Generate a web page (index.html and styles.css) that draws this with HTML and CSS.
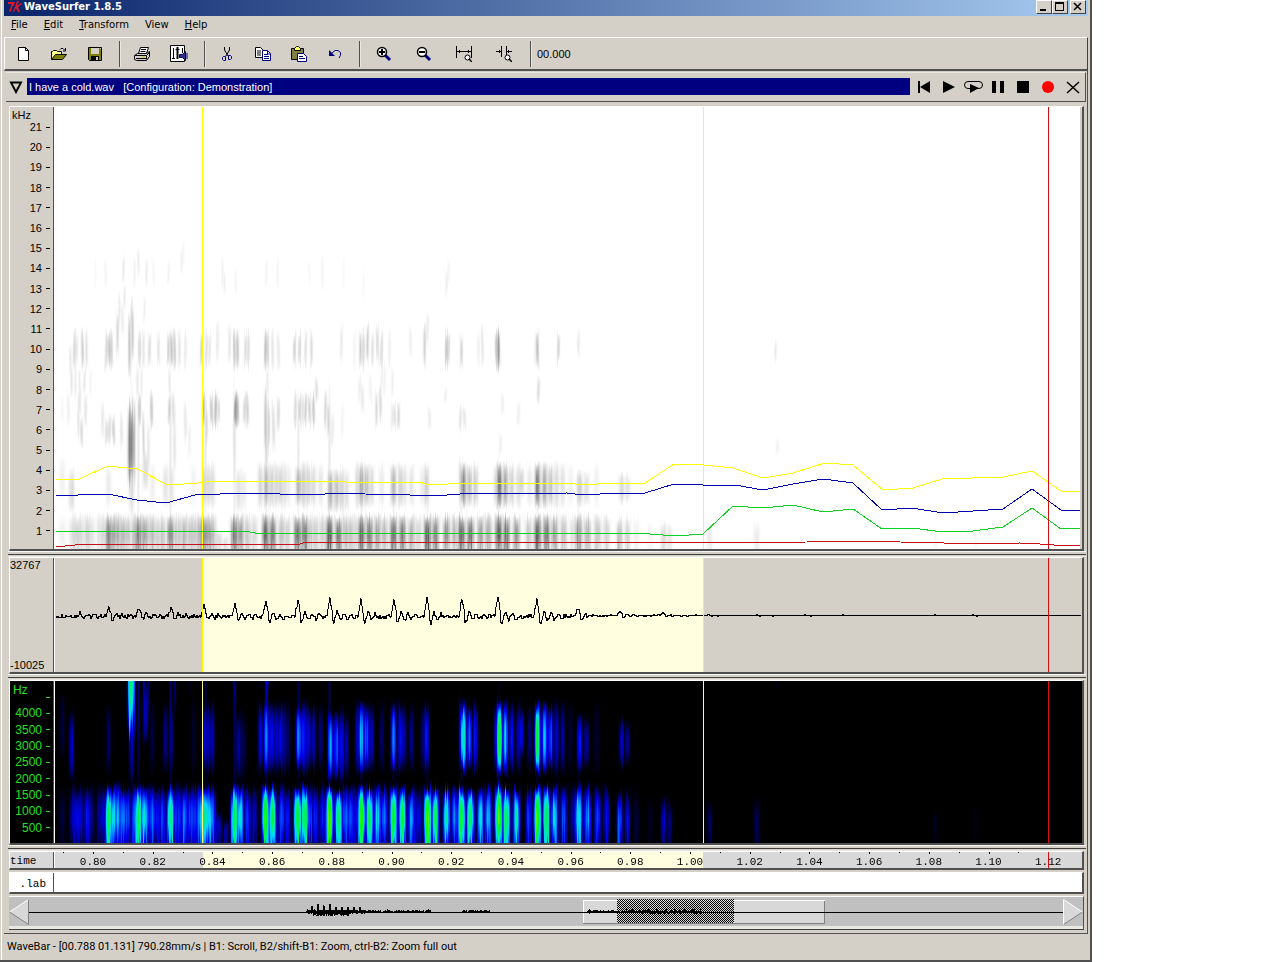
FILE: index.html
```html
<!DOCTYPE html>
<html lang="en">
<head>
<meta charset="utf-8">
<title>WaveSurfer 1.8.5</title>
<link rel="stylesheet" href="styles.css">
</head>
<body>
<div class="window">
  <header class="titlebar">
    <svg class="logo" width="16" height="14" viewBox="0 0 16 14"><path d="M1 2h7l-1 3-2 2-1 5-2-1 2-5 1-2H1zM10 1l2 0-2 5 4-3 1 1-4 3 2 5h-2l-2-4-2 4H6l2-5z" fill="#e01828"/></svg>
    <h1>WaveSurfer 1.8.5</h1>
    <div class="caption-buttons">
      <button aria-label="Minimize"><svg width="10" height="10"><path d="M1 7h6v2H1z"/></svg></button>
      <button aria-label="Maximize"><svg width="10" height="10"><path d="M0 0h9v9H0zM1 2v6h7V2z" fill-rule="evenodd"/></svg></button>
      <button class="close" aria-label="Close"><svg width="10" height="10"><path d="M1 1l7 7M8 1l-7 7" stroke="#000" stroke-width="1.500"/></svg></button>
    </div>
  </header>

  <nav class="menu">
    <button><u>F</u>ile</button>
    <button><u>E</u>dit</button>
    <button><u>T</u>ransform</button>
    <button>View</button>
    <button><u>H</u>elp</button>
  </nav>

  <div class="toolbar">
    <button aria-label="New"><svg class="icon" viewBox="0 0 16 16"><path d="M3.500 1.500h7l3 3v10h-10z" fill="#fff" stroke="#000"/><path d="M10.500 1.500v3h3" fill="none" stroke="#000"/></svg></button>
    <button aria-label="Open"><svg class="icon" viewBox="0 0 16 16"><path d="M.5 13.500v-8h1l1-1h3l1 1h4v3" fill="#ffff90" stroke="#000"/><path d="M.5 13.500l4-5h11l-4 5z" fill="#808000" stroke="#000"/><path d="M9 3.500l1-1h2l2 2M14.500 2v3H12" fill="none" stroke="#000"/></svg></button>
    <button aria-label="Save"><svg class="icon" viewBox="0 0 16 16"><path d="M1.500 1.500h13v13h-12l-1-1z" fill="#808000" stroke="#000"/><path d="M4 2h8v6H4z" fill="#d4d0c8"/><path d="M4 10h8v4H4z"/><path d="M9 11h2v3H9zM13 2h1v1h-1z" fill="#d4d0c8"/></svg></button>
    <span class="sep"></span>
    <button aria-label="Print"><svg class="icon" viewBox="0 0 16 16"><path d="M4.500 7.500l2-6h8l-2 6z" fill="#fff" stroke="#000"/><path d="M7 3.500h5M6.500 5.500h5" stroke="#000"/><path d="M.5 9.500l3-2h9l3-2v5l-3 4H2.500l-2-1z" fill="#d4d0c8" stroke="#000"/><path d="M1 9.500h11.500v4M12.500 9.500l3-3M2 12.500h10" fill="none" stroke="#000"/><path d="M8 10.500h3v1H8z" fill="#cc0"/></svg></button>
    <button class="wide" aria-label="Properties"><svg class="icon big" viewBox="0 0 18 18"><path d="M.5.5h14v16H.5z" fill="#fff" stroke="#000"/><path d="M3.500 3v10M5.500 4.500h4M2 13.500h3M12.500 3v5" stroke="#000"/><path d="M7.500 2v12" stroke="#000" stroke-width="2"/><path d="M9.500 9.500h3l3-3v9l-3-3h-3zM17 8v6" fill="#303080" stroke="#000080"/></svg></button>
    <span class="sep"></span>
    <button aria-label="Cut"><svg class="icon" viewBox="0 0 16 16"><path d="M5.500 1v3l3.500 6M10.500 1v3L7 10" fill="none" stroke="#000"/><path d="M4.500 10.500h2v4h-2l-1-1v-2zM9.500 9.500h2l1 1v2l-1 1h-2z" fill="none" stroke="#000080"/></svg></button>
    <button aria-label="Copy"><svg class="icon" viewBox="0 0 16 16"><path d="M.5 1.500h5l3 3v7h-8z" fill="#fff" stroke="#000"/><path d="M2 5h4M2 7h4M2 9h4" stroke="#000"/><path d="M7.500 4.500h5l3 3v7h-8z" fill="#fff" stroke="#000080"/><path d="M9 8.500h4M9 10.500h5M9 12.500h5M12.500 5v3h3" fill="none" stroke="#000080"/></svg></button>
    <button aria-label="Paste"><svg class="icon" viewBox="0 0 16 16"><path d="M.5 2.500h12v11H.5z" fill="#808040" stroke="#000"/><path d="M3.500 4.500v-2l2-2h2l2 2v2z" fill="#ffff60" stroke="#000"/><path d="M6.500 7.500h6l3 3v5h-9z" fill="#fff" stroke="#000080"/><path d="M8 10.500h4M8 12.500h6" stroke="#000080"/></svg></button>
    <button aria-label="Undo"><svg class="icon" viewBox="0 0 16 16"><path d="M2 4v6h6z" fill="#000080"/><path d="M5 7l3-2.500h3l2.500 2v3L12 12" fill="none" stroke="#000080"/></svg></button>
    <span class="sep"></span>
    <button class="zoom" aria-label="Zoom in"><svg class="icon" viewBox="0 0 16 16"><path d="M9 9l5 5" stroke="#000080" stroke-width="3"/><circle cx="6" cy="6" r="4.500" fill="#fff" stroke="#000" stroke-width="1.500"/><path d="M3 6h6M6 3v6" stroke="#000" stroke-width="2"/></svg></button>
    <button class="zoom" aria-label="Zoom out"><svg class="icon" viewBox="0 0 16 16"><path d="M9 9l5 5" stroke="#000080" stroke-width="3"/><circle cx="6" cy="6" r="4.500" fill="#fff" stroke="#000" stroke-width="1.500"/><path d="M3 6h6" stroke="#000" stroke-width="2"/></svg></button>
    <button class="zoom" aria-label="Zoom full out"><svg class="icon" viewBox="0 0 16 16"><path d="M.5 0v12M15.500 0v12M1 5.500h14M3.500 4v3M12.500 4v3" stroke="#000"/><circle cx="11.500" cy="11.500" r="2.500" fill="#fff" stroke="#000"/><path d="M13 13l3 3" stroke="#000" stroke-width="1.500"/></svg></button>
    <button class="zoom" aria-label="Zoom to selection"><svg class="icon" viewBox="0 0 16 16"><path d="M5.500 0v11M10.500 0v9M0 5.500h5M11 5.500h5M3.500 4v3M12.500 4v3" stroke="#000"/><circle cx="11.500" cy="11.500" r="2.500" fill="#fff" stroke="#000"/><path d="M13 13l3 3" stroke="#000" stroke-width="1.500"/></svg></button>
    <span class="sep"></span>
    <output>00.000</output>
  </div>

  <main class="work">
    <section class="sound">
      <button class="fold" aria-label="Fold"><svg width="14" height="14"><path d="M2 2.500h10L7 12z" fill="none" stroke="#000" stroke-width="2"/></svg></button>
      <h2>I have a cold.wav &nbsp; [Configuration: Demonstration]</h2>
      <div class="transport">
        <button aria-label="To start"><svg width="14" height="14"><path d="M1 1h2v12H1zM13 1v12L3 7z"/></svg></button>
        <button aria-label="Play"><svg width="14" height="14"><path d="M1 1l12 6-12 6z"/></svg></button>
        <button aria-label="Loop"><svg width="20" height="14"><rect x=".5" y="1.500" width="18" height="7" rx="3.500" fill="none" stroke="#000"/><path d="M6 4l9 4-9 5z"/></svg></button>
        <button aria-label="Pause"><svg width="14" height="14"><path d="M1 1h4v12H1zM9 1h4v12H9z"/></svg></button>
        <button aria-label="Stop"><svg width="14" height="14"><path d="M1 1h12v12H1z"/></svg></button>
        <button aria-label="Record"><svg width="14" height="14"><circle cx="7" cy="7" r="6" fill="#f00"/></svg></button>
        <button aria-label="Close sound"><svg width="14" height="14"><path d="M1 2l12 11M13 2L1 13" stroke="#000" stroke-width="1.500"/></svg></button>
      </div>
    </section>

    <section class="pane spectrogram">
      <div class="axis">
        <span class="unit">kHz</span>
        <ol><li>21</li><li>20</li><li>19</li><li>18</li><li>17</li><li>16</li><li>15</li><li>14</li><li>13</li><li>12</li><li>11</li><li>10</li><li>9</li><li>8</li><li>7</li><li>6</li><li>5</li><li>4</li><li>3</li><li>2</li><li>1</li></ol>
      </div>
      <div class="plot">
        <canvas id="gray" width="1027" height="442"></canvas>
        <svg class="overlay" viewBox="55 107 1027 442" preserveAspectRatio="none">
          <path d="M202.500 107v442M703.500 107v442" stroke="#ff0"/>
          <polyline stroke="#ff0" points="56,479 79,479 108,466 137,469 168,485 198,483 213,481 325,481 345,482 420,482 425,484 448,484 455,483 565,483 575,484 597,484 602,483 645,483 674,464 703,465 733,468 763,478 793,473 825,463 853,465 883,490 913,488 942,479 1003,477 1032,471 1061,491 1081,491"/>
          <polyline stroke="#0000b0" points="56,495 78,495 108,494 137,500 166,503 195,495 245,493 270,493 280,494 325,494 335,493 355,493 365,494 410,495 435,496 460,494 567,493 575,494 600,494 605,493 645,493 674,484 703,485 735,485 763,490 793,484 823,479 853,483 882,510 912,508 943,513 1003,509 1032,489 1061,510 1081,510"/>
          <polyline stroke="#10d020" points="56,531 110,531 135,532 165,531 245,531 255,533 420,533 500,533 650,534 675,536 703,534 733,506 763,508 793,505 823,512 853,509 882,529 912,528 943,532 973,531 1003,527 1032,508 1061,529 1081,528"/>
          <polyline stroke="#c81018" points="56,547 75,545 95,544 300,544 303,543 538,542 610,542 700,543 807,542 837,541 867,542 883,541 900,542 987,544 1020,543 1040,544 1054,545 1081,545"/>
          <path d="M1048.500 107v442" stroke="#d01010"/>
        </svg>
      </div>
    </section>
    <div class="sash"></div>

    <section class="pane waveform">
      <div class="axis ends"><span>32767</span><span>-10025</span></div>
      <div class="plot">
        <svg class="overlay" viewBox="55 558 1027 114" preserveAspectRatio="none">
          <rect x="203" y="558" width="500" height="114" fill="#ffffe0"/>
          <polyline id="wave" stroke="#000"/>
          <path d="M202.500 558v114M703.500 558v114" stroke="#ff0"/>
          <path d="M1048.500 558v114" stroke="#d01010"/>
        </svg>
      </div>
    </section>
    <div class="sash"></div>

    <section class="pane narrowband">
      <div class="axis">
        <span class="unit">Hz</span>
        <ol><li></li><li>4000</li><li>3500</li><li>3000</li><li>2500</li><li>2000</li><li>1500</li><li>1000</li><li>500</li></ol>
      </div>
      <div class="plot">
        <canvas id="color" width="1027" height="162"></canvas>
        <svg class="overlay" viewBox="55 681 1027 162" preserveAspectRatio="none">
          <path d="M202.500 681v162M703.500 681v162" stroke="#ffff80"/>
          <path d="M1048.500 681v162" stroke="#e01010"/>
        </svg>
      </div>
    </section>
    <div class="sash"></div>

    <section class="pane time">
      <div class="axis">time</div>
      <div class="plot"><svg class="overlay" id="ruler"></svg></div>
    </section>
    <section class="pane lab">
      <div class="axis">.lab</div>
      <div class="plot"></div>
    </section>

    <section class="wavebar">
      <button aria-label="Scroll left"><svg width="20" height="26"><path d="M19.500.5v25L.5 13z" fill="#d8d8d8"/><path d="M.5 13l19-12.500" stroke="#fff"/><path d="M19.500.5v25L.5 13" fill="none" stroke="#808080"/></svg></button>
      <div class="track">
        <svg viewBox="29 897 1034 29" preserveAspectRatio="none">
          <defs><pattern id="dots" width="2" height="2" patternUnits="userSpaceOnUse"><path d="M0 0h1v1H0zM1 1h1v1H1z"/></pattern></defs>
          <rect x="583" y="900" width="242" height="24" fill="#d8d8d8"/>
          <path d="M583.500 923v-23h241" fill="none" stroke="#fff"/>
          <path d="M583 923.500h241.500v-23" fill="none" stroke="#808080"/>
          <rect x="617" y="899" width="117" height="24" fill="url(#dots)"/>
          <path d="M29 912.500h1034" stroke="#000"/>
          <polyline id="overview" fill="none" stroke="#000"/>
        </svg>
      </div>
      <button aria-label="Scroll right"><svg width="20" height="26"><path d="M.5.5v25L19.500 13z" fill="#d8d8d8"/><path d="M.5 25.500l19-12.500" stroke="#808080"/><path d="M.5 25.500V.5l19 12.500" fill="none" stroke="#fff"/></svg></button>
    </section>
  </main>

  <footer class="status">WaveBar - [00.788 01.131] 790.28mm/s | B1: Scroll, B2/shift-B1: Zoom, ctrl-B2: Zoom full out</footer>
</div>
<script src="app.js"></script>
</body>
</html>
```
FILE: styles.css
```css
* { box-sizing: border-box; }
body {
  margin: 0;
  padding-right: 182px;
  background: #fff;
  color: #000;
  font: 11px/14px "Liberation Sans", Arial, sans-serif;
}
button {
  margin: 0;
  padding: 0;
  border: 0;
  background: none;
  color: inherit;
  font: inherit;
}
svg { display: block; }
h1, h2 { margin: 0; }
ol { margin: 0; padding: 0; list-style: none; }

.window {
  min-height: 100vh;
  padding: 0 2px 0 4px;
  display: flex;
  flex-direction: column;
  background: #d4d0c8;
  border-right: 2px solid #505050;
  border-bottom: 2px solid #505050;
  box-shadow: inset 1px 0 #d4d0c8, inset 2px 0 #fff;
}

.titlebar {
  display: flex;
  height: 16px;
  padding-left: 3px;
  background: linear-gradient(90deg, #0a246a, #a6caf0);
  color: #fff;
}
.titlebar h1 {
  flex: 1;
  padding-left: 1px;
  font: bold 10px/14px "DejaVu Sans", sans-serif;
}
.caption-buttons { display: flex; padding-right: 2px; }
.caption-buttons button {
  width: 16px;
  height: 14px;
  padding: 1px 2px;
  background: #d4d0c8;
  border: 1px solid;
  border-color: #fff #404040 #404040 #fff;
}
.caption-buttons .close { margin-left: 2px; }

.menu {
  display: flex;
  align-items: flex-start;
  gap: 16px;
  height: 21px;
  padding-left: 7px;
  font: 10px/18px "DejaVu Sans", sans-serif;
}

.toolbar {
  display: flex;
  align-items: center;
  height: 34px;
  border: 1px solid #fff;
  border-right-color: #404040;
  border-bottom: 2px solid #505050;
}
.toolbar button { display: flex; justify-content: center; width: 36px; }
.toolbar .wide { width: 38px; }
.toolbar .zoom { width: 40px; }
.icon { width: 16px; height: 16px; }
.icon.big { width: 18px; height: 18px; }
.sep {
  width: 2px;
  height: 26px;
  margin: 0 3px 0 6px;
  background: linear-gradient(90deg, #505050 50%, #e8e8e0 50%);
}
.toolbar output { margin-left: 2px; }

.work {
  padding: 1px 3px 3px 5px;
  border-right: 1px solid #505050;
  border-bottom: 1px solid #505050;
}
.sound {
  display: flex;
  align-items: center;
  height: 30px;
  margin: 0 -2px 4px -3px;
  padding: 0 5px 2px 0;
  border-top: 1px solid #e8e8e0;
  border-right: 1px solid #505050;
  border-bottom: 1px solid #505050;
}
.fold { padding: 2px 4px 0 3px; }
.sound h2 {
  flex: 1;
  height: 17px;
  padding-left: 2px;
  background: #000080;
  color: #fff;
  font: 11px/18px "Liberation Sans", Arial, sans-serif;
}
.transport { display: flex; align-items: center; gap: 11px; padding: 2px 0 0 7px; }
.transport button:nth-child(3) { margin: 0 -4px 0 -3px; }

.pane {
  display: grid;
  grid-template: 100% / 45px 1fr;
  border: 1px solid #fff;
  border-right: 2px solid #505050;
  border-bottom: 2px solid #505050;
}
.axis {
  display: flex;
  flex-direction: column;
  border-right: 1px solid #fff;
  box-shadow: inset -1px 0 #505050;
}
.axis ol { flex: 1; display: flex; flex-direction: column; }
.axis li {
  flex: 1;
  display: flex;
  align-items: center;
  justify-content: flex-end;
  gap: 4px;
  min-height: 0;
  padding-right: 4px;
  line-height: 10px;
}
.axis li::after { content: ""; width: 4px; height: 1px; background: currentColor; }
.plot { position: relative; overflow: hidden; }
.plot canvas { display: block; width: 100%; height: 100%; }
.overlay {
  position: absolute;
  inset: 0;
  width: 100%;
  height: 100%;
  fill: none;
  shape-rendering: crispEdges;
}

.spectrogram { height: 445px; }
.spectrogram .plot::after {
  content: "";
  position: absolute;
  inset: 0 0 0 auto;
  width: 2px;
  background: #d4d0c8;
}
.spectrogram .unit { height: 10px; padding-left: 2px; line-height: 16px; }
.spectrogram ol { padding-bottom: 8px; }

.sash {
  height: 6px;
  margin: 0 -2px 0 -1px;
  background: linear-gradient(#f4f4f0 1px, #d4d0c8 1px 3px, #404040 3px 4px, #d4d0c8 4px 5px, #e8e8e0 5px);
}

.waveform { height: 117px; }
.ends { justify-content: space-between; }

.narrowband { height: 165px; background: #000; }
.narrowband .axis { color: #20e020; font-size: 12px; }
.narrowband .unit { height: 8px; padding-left: 3px; line-height: 18px; }
.narrowband ol { padding-bottom: 7px; }

.time, .lab { font: 11px/18px "Liberation Mono", monospace; }
.time { height: 19px; margin-bottom: 2px; background: #d8d8d8; }
.lab { height: 22px; margin-bottom: 2px; background: #fff; }
.lab .axis { align-items: flex-end; padding-right: 8px; line-height: 22px; }
#ruler text { fill: #000; text-anchor: middle; }

.wavebar {
  display: flex;
  align-items: center;
  height: 34px;
  padding-bottom: 3px;
  background: #c0c0c0;
  border-top: 1px solid #fff;
  border-right: 1px solid #505050;
  border-bottom: 1px solid #404040;
  box-shadow: inset 0 -3px #e8e8e0;
}
.wavebar button { flex: none; }
.track { flex: 1; }
.track svg { width: 100%; height: 29px; shape-rendering: crispEdges; }

.status {
  padding: 6px 3px;
  font: 11px/14px Roboto, "Liberation Sans", sans-serif;
}
```
FILE: app.js
```js
// Energy blobs: [x, centre kHz, half height kHz, amplitude, half width px]
const blobs = [];
const add = (list, f, h, w) => list.forEach(([x, a, fc, fh, ww]) =>
  blobs.push([x, fc || f, fh || h, a, ww || w]));

// voicing pulses, first formant
add([[62,.1],[72,.2],[76,.3],[80,.28],[87,.32],[91,.18],[99,.2],[102,.22],[108,.75],[113,.5],[117,.5],[122,.45],[127,.4],
  [134,.4],[138,.75],[144,.6],[148,.3],[152,.4],[157,.3],[162,.35],[170,.72],[175,.3],[179,.3],[184,.45],[190,.4],[195,.35],
  [200,.5],[204,.65],[208,.55],[212,.4],[218,.25,.4,.7],[225,.2,.3,.5],[234,.85],[240,.62],[247,.35],[254,.25],
  [265,.95],[272,.82],[281,.42],[287,.3],[297,.95],[304,.85],[309,.4],[315,.35],[322,.3],[329,1],[338,.85],[345,.4],[350,.4],[355,.3],
  [361,.95],[369,.85],[377,.6],[384,.45],[393,.98],[402,.85],[411,.5],[418,.3],[427,1],[435,.78],[446,.72],[454,.45],
  [461,1],[470,.88],[480,.6],[488,.55],[498,1],[506,.88],[516,.65],[528,.35],[537,1],[546,.85],[554,.6],[563,.4],[572,.2],
  [578,.7],[587,.5],[597,.4],[606,.3],[619,.45],[627,.3],[636,.12],[650,.08],[663,.25],[669,.18],[709,.14],[756,.14]],
  .72, 1.12, 3.6);
blobs.forEach(b => { if (b[0] > 615) { b[1] = .5; b[2] = b[0] > 640 ? .95 : 1.2; b[4] = 3; } });
add([[935,.09],[975,.05]], .4, .8, 1.5);

// second band
add([[62,.1,3.6],[71,.25,3],[108,.13,3.2],[131,.2,3,1.2],[145,.24,4,1.1],[152,.1],[165,.18],[171,.16],[193,.08],
  [204,.25],[208,.24],[212,.2],[238,.2,3],[243,.14,3],[260,.28],[266,.45],[271,.3],[276,.25],[280,.3],[284,.2],[288,.12],
  [298,.48],[303,.35],[308,.3],[313,.24],[320,.16],[330,.48,3],[336,.4,3],[341,.3,3],[346,.2,3],
  [357,.25],[361,.5],[366,.4],[371,.25],[381,.14],[393,.48],[400,.3],[404,.2],[411,.18],[422,.14],[426,.28],
  [461,.3,3.4,1.2],[463,.68],[469,.42],[475,.32],[496,.3],[499,.78],[505,.55],[511,.3],[518,.22],[521,.26,3.4,.8],[529,.15],
  [537,.82],[544,.55],[550,.42],[556,.24],[562,.2],[570,.1],[579,.35,3.1,.9],[586,.22,3.1,.9],[596,.1],[621,.24,3.1,.8],[627,.2,3.1,.7]],
  3.25, 1.15, 2.8);
[131,138,170,205,234,266,298,329,361,393,427,461,498,537].forEach((x, i) =>
  blobs.push([x, i < 8 ? 4.6 : 3, i < 8 ? 3.8 : 1.6, .15, 1.2]));
add([[578,.1]], 2.4, 1.2, 1);

// fricative energy
add([[130,.88,5.3,2.2,2.6],[133,.5,5.3,2.1,2],[139,.35,7,.9],[143,.27,5.6,1.4,1.2],[148,.15,5,1.4],[151,.34],[169,.27],[173,.22],[174,.17,5.2,1.4],
  [185,.16,6.4,1.1],[189,.1,5.5,1],[203,.42],[206,.22,6.2,1.1],[211,.34],[215,.4],[218,.22],[235,.7],[237,.45],[244,.28],[247,.28],
  [234,.16,5.5,1.6],[265,.32,6.5,1.7],[268,.3,6.2,1.5],[273,.2,6.2,1.4],[278,.24,6.8],[266,.2,5,1.2],[295,.24],[299,.3],[302,.2],[305,.28],
  [309,.3],[313,.34],[316,.22,8,.7],[325,.24],[328,.24,6.5],[332,.14,6],[342,.06,6.5],[359,.1,8],[362,.14,7.6],[370,.08,8],
  [376,.22],[380,.24,7.3],[384,.08,8.5],[392,.14,6.7,.8],[394,.2,6.7,.7],[398,.24,6.7,.7],[429,.13,6.6,.6],[460,.17,6.6,.7],[464,.15,6.6,.6],
  [502,.1,7.3,.6],[500,.09,5.3,.7],[518,.11,6.8,.6],[538,.22,8,.7],[445,.1,7.7,.5],[777,.09,5.2,.5],
  [62,.05],[68,.1],[79,.2,7.4],[85,.17],[81,.26,5.9,.8],[78,.16,6.4],[102,.14,6.5],[106,.24,5.9,.7],[109,.22,6],[113,.28,6,.8],[121,.16,6]],
  7, .95, 1.6);
add([[71,.18],[75,.14],[79,.14],[84,.18],[90,.08],[137,.15],[141,.13],[169,.13],[267,.15],[381,.1],[392,.12]], 8.4, .9, 1.2);
add([[70,.14,9.4],[74,.26],[76,.2],[82,.34],[86,.18],[106,.28],[109,.38],[111,.27],[117,.25,10.8,1.2],[122,.12,11.5],[129,.36,10.2,1.8],
  [132,.32,10.8,1.6],[139,.27],[143,.16],[149,.24],[158,.18],[168,.27],[171,.37],[174,.34],[179,.16],[185,.14],
  [201,.28],[206,.2],[209,.14],[217,.14,10.4],[229,.16,10.3],[234,.36],[237,.38],[245,.22],[248,.22],[265,.37],[267,.34],[272,.16],
  [278,.15,9.9],[294,.28],[299,.28],[305,.18],[311,.22],[341,.14,10.3],[354,.08],[360,.3],[363,.28],[367,.3,10.3],[372,.2],
  [377,.24,10.3],[381,.24,9.9],[389,.1],[410,.1,10.4],[424,.28,10.2],[427,.13,11],[446,.38],[448,.27],[461,.28,9.9],
  [478,.1],[482,.16,10.2],[496,.42],[498,.62],[535,.12],[537,.4],[558,.28,10.1,.9],[578,.14,10.3,.7],[775,.12,9.9,.6]],
  10, 1.05, 1.5);
add([[95,.05],[105,.08],[119,.14,12,.9],[123,.14,14],[124,.12,12.6],[131,.18,11.8],[134,.09],[138,.12,14.3],[146,.13],[153,.07],
  [144,.1,12],[168,.08],[181,.1,14.4],[183,.06,14.8],[222,.09],[224,.09,13.3],[235,.07,13.4],[266,.08],[277,.07],[309,.05],
  [322,.08],[343,.04],[363,.05,13.2],[446,.11,13.3],[448,.09,13.8]], 13.8, .8, 1.2);

// repeatable noise
const rnd = n => { const s = Math.sin(n * 12.9898) * 43758.5453; return s - Math.floor(s); };

function field(w, h, base, perKHz) {
  const e = new Float32Array(w * h);
  blobs.forEach(([bx, fc, fh, a, bw]) => {
    const cx = bx - 55;
    const tilt = fc > 5 ? (rnd(bx * 1.7 + fc) - .5) * 1.2 : 0;
    for (let x = Math.max(0, Math.floor(cx - bw * 3)); x < Math.min(w, cx + bw * 3 + 1); x++) {
      const k = fh * (fc > 5 ? .7 + .5 * rnd(x + bx) : .85 + .3 * rnd(x + bx));
      const streak = a * (.82 + .28 * rnd(x * 3 + 1));
      for (let y = Math.max(0, Math.floor(base - (fc + k) * perKHz)); y < Math.min(h, base - (fc - k) * perKHz); y++) {
        const f = (base - y) / perKHz;
        let g = (f - fc) / k;
        const d = Math.abs(x - cx - tilt * g) / bw;
        if (fc < 1 && g < 0) g *= .35;
        let v = streak * Math.exp(-Math.pow(d, 2.4)) * Math.max(0, 1 - Math.pow(Math.abs(g), 2.4));
        if (fc < 1 && f < .7) v *= 1 - (.7 - f) * .9 * rnd(x * 7 + 3);
        const i = y * w + x;
        e[i] = Math.max(e[i], v) + Math.min(e[i], v) * .25;
      }
    }
  });
  return e;
}

const stops = [[0, 0, 0, 0], [.08, 0, 0, 40], [.28, 0, 0, 235], [.42, 0, 90, 255], [.56, 0, 215, 255], [.7, 0, 240, 130], [.92, 0, 245, 30], [1.12, 130, 255, 0]];
function heat(v) {
  let i = 1;
  while (i < stops.length - 1 && v > stops[i][0]) i++;
  const a = stops[i - 1], b = stops[i];
  const t = Math.min(1, (v - a[0]) / (b[0] - a[0]));
  return [1, 2, 3].map(c => a[c] + (b[c] - a[c]) * t);
}
function paint(id, base, perKHz, map) {
  const c = document.getElementById(id), g = c.getContext("2d");
  const img = g.createImageData(c.width, c.height);
  field(c.width, c.height, base, perKHz).forEach((v, i) => {
    const p = map(v);
    img.data.set([p[0], p[1], p[2], 255], i * 4);
  });
  g.putImageData(img, 0, 0);
}
paint("gray", 443.6, 20.15, v => { const s = 255 - 150 * Math.min(v, 1.1); return [s, s, s]; });
paint("color", 163, 32.7, heat);

// Waveform: glottal peaks [x, height], each followed by damped ringing
const peaks = [[80,3],[109,8],[139,8],[171,8],[204,10],[235,12],[266,16],[298,16],[330,17],[361,16],[394,17],[427,17],[462,17],[498,19],[537,17],[578,8],[620,5],[663,3]];
const pts = [];
for (let x = 56; x <= 1081; x++) {
  let v = 0;
  peaks.forEach(([px, h]) => {
    const t = x - px;
    if (Math.abs(t) < 3) v += h * (1 - Math.abs(t) / 3);
    if (t >= 3 && t < 30) v -= h * .45 * Math.exp(-t / 13) * Math.sin((t - 2) * .9) + h * .06;
  });
  if (x < 600) v += (rnd(x) - .6) * 4;
  else if (x < 700) v += (rnd(x) - .5) * 1.4;
  else v = [708, 709, 757, 805, 843, 935, 973].includes(x) ? 1 : [712, 718, 760, 773, 811, 977].includes(x) ? -1 : 0;
  pts.push(x + "," + (Math.round(615 - v) + .5));
}
document.getElementById("wave").setAttribute("points", pts.join(" "));

const over = [];
for (let x = 30; x < 1063; x++) {
  let up = 0, down = 0;
  if (x > 306 && x < 365) {
    up = x % 6 === 0 && x > 310 ? 4 + 5 * rnd(x) : 1 + 2 * rnd(x);
    down = x > 312 && x < 350 ? 1 + 3 * rnd(x + 9) : rnd(x) * 2;
  } else if ((x >= 365 && x < 431) || (x > 461 && x < 490)) up = rnd(x) * 1.5;
  else if (x > 587 && x < 702) {
    up = x > 640 && x % 9 === 0 ? 3 : rnd(x) * 1.5;
    down = x > 640 ? rnd(x) * 1.5 : 0;
  }
  over.push(`${x},${912.5 - up}`, `${x},${912.5 + down}`);
}
document.getElementById("overview").setAttribute("points", over.join(" "));

// Time ruler, positions in percent of the plot width
const pc = x => (x - 55) / 10.27 + "%";
let r = `<rect x="${pc(203)}" width="${500 / 10.27}%" height="100%" fill="#ffffe0"/>`;
for (let i = -1; i <= 32; i++) r += `<rect x="${pc(93 + i * 29.85)}" width="1" height="${i % 2 ? 1 : 2}" fill="#000"/>`;
for (let i = 0; i <= 16; i++) r += `<text x="${pc(93 + i * 59.7)}" y="13">${(.8 + i * .02).toFixed(2)}</text>`;
r += `<rect x="${pc(1048)}" width="1" height="100%" fill="#d01010"/>`;
document.getElementById("ruler").innerHTML = r;
```
